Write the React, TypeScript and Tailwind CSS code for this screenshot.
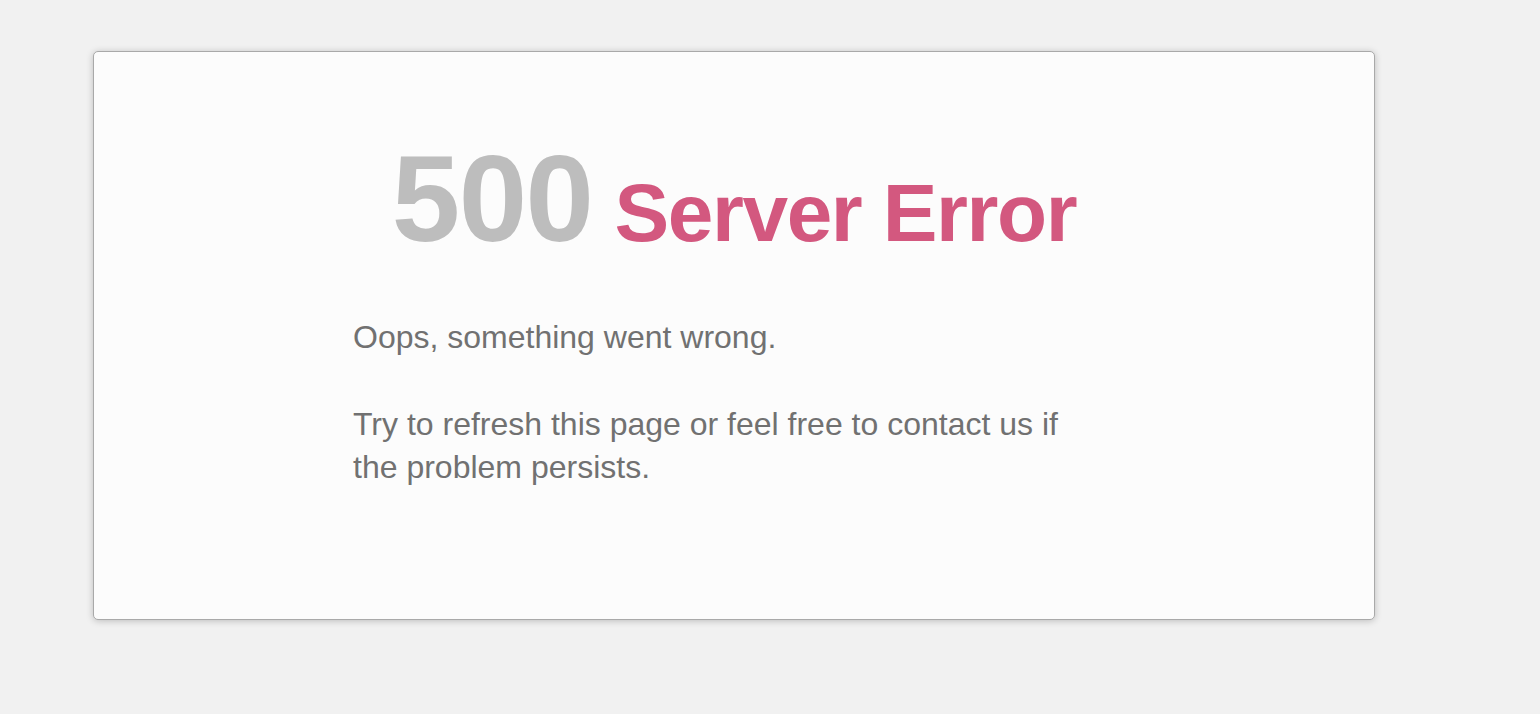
import React from 'react';

// Simple 500 error page: one card on a light grey page
export default function App() {
  return (
    <div className="min-h-[714px] w-full bg-[#f1f1f1] pt-[51px] pl-[93px] font-['Liberation_Sans',Arial,sans-serif]">
      <div className="w-[1282px] h-[569px] rounded-[5px] border border-[#a9a9a9] bg-[#fcfcfc] shadow-[0_1px_7px_rgba(0,0,0,0.22)]">
        <div className="pt-[85px]">
          <h1 className="text-center leading-none font-bold whitespace-nowrap">
            <span className="text-[123px] leading-none tracking-[-1.5px] text-[#bdbdbd]">500</span>
            <span className="ml-[22px] text-[82px] leading-none tracking-[-1.4px] text-[#d3587f]">Server Error</span>
          </h1>
        </div>
        <div className="mx-auto mt-[56px] w-[762px] text-[32px] leading-[43px] text-[#717171]">
          <p>Oops, something went wrong.</p>
          <p className="mt-[44px] w-[740px]">Try to refresh this page or feel free to contact us if the problem persists.</p>
        </div>
      </div>
    </div>
  );
}
